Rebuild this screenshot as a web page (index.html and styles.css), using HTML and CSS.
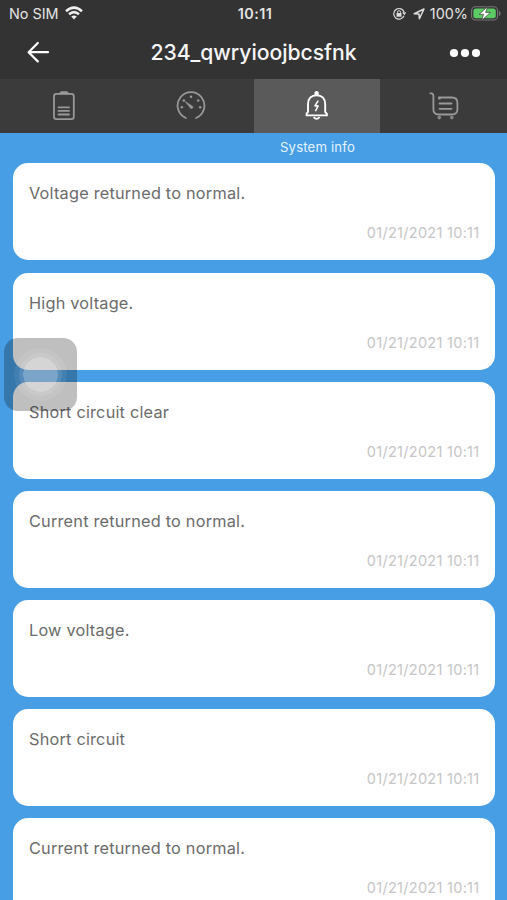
FILE: index.html
```html
<!DOCTYPE html>
<html lang="en">
<head>
<meta charset="utf-8">
<title>System info</title>
<link rel="stylesheet" href="styles.css">
</head>
<body>
<header class="status">
  <div class="carrier"><span>No SIM</span>
    <svg class="wifi" width="18" height="14" viewBox="0 0 18 14"><g fill="none" stroke="#eee" stroke-width="2.5"><path d="M1 5.2Q9-2 17 5.2"/><path d="M4 8.3Q9 3.9 14 8.3"/></g><path d="M6.2 10.5Q9 8.3 11.8 10.5L9 13.5Z" fill="#eee"/></svg>
  </div>
  <div class="clock">10:11</div>
  <div class="power">
    <svg width="14" height="14" viewBox="0 0 14 14"><path d="M12 8.8A5.3 5.3 0 1 1 12.2 5.5M10.8 5.3l1.5 2 1.2-2" fill="none" stroke="#ddd" stroke-width="1.2"/><path d="M5.4 6.5V5.3a1.6 1.6 0 0 1 3.2 0v1.2" fill="none" stroke="#ddd"/><rect x="4.5" y="6" width="5" height="3.8" rx=".5" fill="#ddd"/></svg>
    <svg class="locate" width="12" height="12" viewBox="0 0 12 12"><path d="M1.2 5.7 11 1 6.4 10.8 6 6.1Z" fill="none" stroke="#ddd" stroke-width="1.5" stroke-linejoin="round"/></svg>
    <span>100%</span>
    <svg class="charge" width="30" height="15" viewBox="0 0 30 15"><rect x=".6" y=".8" width="26" height="13.2" rx="4" fill="none" stroke="#777" stroke-width="1.1"/><rect x="2.4" y="2.6" width="22.4" height="9.6" rx="2.5" fill="#5bcb64"/><path d="M28 5v5q1.6-.8 1.6-2.5T28 5" fill="#777"/><path d="M16.6.4 8.2 8.4h4.3L10.6 14.6l8.8-8.2h-4.7Z" fill="#fff" stroke="#333" stroke-width=".7"/></svg>
  </div>
</header>
<div class="titlebar">
  <svg class="back" width="24" height="24" viewBox="0 0 24 24"><path d="M11.8 3 2.6 12.2 11.8 21.4M3 12.2H22" fill="none" stroke="#fff" stroke-width="2.2" stroke-linecap="round" stroke-linejoin="round"/></svg>
  <h1>234_qwryioojbcsfnk</h1>
  <svg class="more" width="32" height="10" viewBox="0 0 32 10" fill="#fff"><circle cx="5" cy="5" r="4.1"/><circle cx="16" cy="5" r="4.1"/><circle cx="27" cy="5" r="4.1"/></svg>
</div>
<nav class="tabs">
  <div class="tab"><svg width="30" height="30" viewBox="0 0 30 30"><rect x="5" y="2.9" width="19.8" height="25.3" rx="2.4"/><path d="M9.5 16.3H20M9.5 19.9H20M9.5 23.5H20" stroke-linecap="round"/><path d="M11.2 2.3 12.3 1.2h5.4l1.1 1.1Z" fill="#999"/></svg></div>
  <div class="tab"><svg width="30" height="30" viewBox="0 0 30 30"><path d="M9.9 27A13.4 13.4 0 1 1 20.1 27" stroke-linecap="round"/><path d="M8.9 10.2 14.6 17.3Q16.3 18.2 17 16.5 17 15 15.4 14.4Z" fill="#999" stroke-width=".5"/><g fill="#999" stroke="none"><circle cx="5.8" cy="16.3" r="1.25"/><circle cx="7.8" cy="9.4" r="1.25"/><circle cx="15" cy="5.8" r="1.25"/><circle cx="22.2" cy="9.4" r="1.25"/><circle cx="24.2" cy="16.3" r="1.25"/></g></svg></div>
  <div class="tab active"><svg width="30" height="30" viewBox="0 0 30 30"><path d="M4.6 24.4V22.7L6 21V13.2C6 7.3 9.6 4.2 14.6 4.2S23.2 7.3 23.2 13.2V21L24.9 22.9V24.4Z" stroke-width="1.9" stroke-linejoin="round"/><path d="M13.4 3.2V1.7q1.2-1.4 2.4 0v1.5Z" fill="#fff"/><path d="M11.6 26.2Q14.6 29.4 17.6 26.2" stroke-width="1.8"/><path d="M16.2 9.6 12.8 15.1 16.3 14.7 13.4 20.1" stroke-width="1.5" stroke-linejoin="bevel"/></svg></div>
  <div class="tab"><svg width="32" height="30" viewBox="0 0 32 30"><path d="M2.3 2.3H3.3Q5.4 2.5 5.4 5V18.3Q5.4 23.5 10.6 23.5H24Q29.4 23.5 29.4 18.3V12Q29.4 6.5 24 6.5H10.8" stroke-linecap="round"/><path d="M11.5 12.5H23.5M11.5 17.8H23.5M11 7.5h1" stroke-linecap="round"/><g fill="#888" stroke="none"><circle cx="11.3" cy="26.6" r="1.8"/><circle cx="23.8" cy="26.6" r="1.8"/></g></svg></div>
</nav>
<div class="caption"><span>System info</span></div>
<main class="list">
  <article class="card"><p>Voltage returned to normal.</p><time>01/21/2021 10:11</time></article>
  <article class="card"><p>High voltage.</p><time>01/21/2021 10:11</time></article>
  <article class="card"><p>Short circuit clear</p><time>01/21/2021 10:11</time></article>
  <article class="card"><p>Current returned to normal.</p><time>01/21/2021 10:11</time></article>
  <article class="card"><p>Low voltage.</p><time>01/21/2021 10:11</time></article>
  <article class="card"><p>Short circuit</p><time>01/21/2021 10:11</time></article>
  <article class="card"><p>Current returned to normal.</p><time>01/21/2021 10:11</time></article>
</main>
<div class="assist"></div>
</body>
</html>
```
FILE: styles.css
```css
* { box-sizing: border-box; }
body {
  margin: 0;
  height: 900px;
  overflow: hidden;
  position: relative;
  display: flex;
  flex-direction: column;
  background: #479ee5;
  font-family: Inter, "Liberation Sans", sans-serif;
}
svg { display: block; flex: none; }
.status {
  height: 27px;
  flex: none;
  padding: 0 6px 0 9px;
  display: grid;
  grid-template-columns: 1fr auto 1fr;
  align-items: center;
  background: #333;
  color: #e4e4e4;
  font-size: 14.4px;
  line-height: 27px;
}
.carrier, .power { display: flex; align-items: center; }
.carrier { gap: 6px; }
.wifi { margin-top: -2px; }
.power { justify-content: flex-end; }
.locate { margin: 0 5px 0 7px; }
.charge { margin-left: 3px; margin-top: -1px; }
.clock { font-weight: 600; letter-spacing: .4px; }
.titlebar {
  height: 52px;
  flex: none;
  padding: 0 26px;
  display: grid;
  grid-template-columns: 1fr auto 1fr;
  align-items: center;
  background: #333;
}
.more { justify-self: end; margin-top: -1px; }
.back { margin-top: -2px; }
h1 {
  margin: 0;
  color: #f6f6f6;
  font-size: 21.2px;
  font-weight: 500;
  letter-spacing: -.05px;
  line-height: 50px;
  padding-bottom: 2px;
}
.tabs {
  height: 54px;
  flex: none;
  display: grid;
  grid-template-columns: repeat(4, 1fr);
  background: #3b3b3b;
}
.tab { display: flex; align-items: center; justify-content: center; padding-left: 1px; }
.tab svg { fill: none; stroke: #999; stroke-width: 1.8; }
.tab.active { background: #5a5a5a; }
.tab.active svg { stroke: #fff; }
.caption {
  height: 30.4px;
  flex: none;
  width: 127px;
  margin-left: 254px;
  text-align: center;
  color: #e4f3ff;
  font-size: 13.2px;
  letter-spacing: .15px;
  line-height: 28px;
}
.list {
  padding: 0 12.5px 0 13px;
  display: flex;
  flex-direction: column;
  gap: 12.15px;
}
.card {
  height: 97px;
  flex: none;
  padding: 20px 15px 17px 16px;
  display: flex;
  flex-direction: column;
  justify-content: space-between;
  border-radius: 15px;
  background: #fff;
}
.card p { margin: 0; color: #6b6b6b; font-size: 16.3px; letter-spacing: .21px; line-height: 20px; }
.card time { align-self: flex-end; color: #c6c6c6; font-size: 14.5px; letter-spacing: .29px; line-height: 20px; }
.assist {
  position: absolute;
  left: 4px;
  top: 338px;
  width: 73px;
  height: 73px;
  border-radius: 14px;
  background:
    radial-gradient(circle, rgba(255,255,255,.34) 0 17px, rgba(255,255,255,.16) 17.5px 21px, rgba(255,255,255,.07) 21.5px 26px, transparent 26.5px),
    rgba(0,0,0,.25);
}
```
